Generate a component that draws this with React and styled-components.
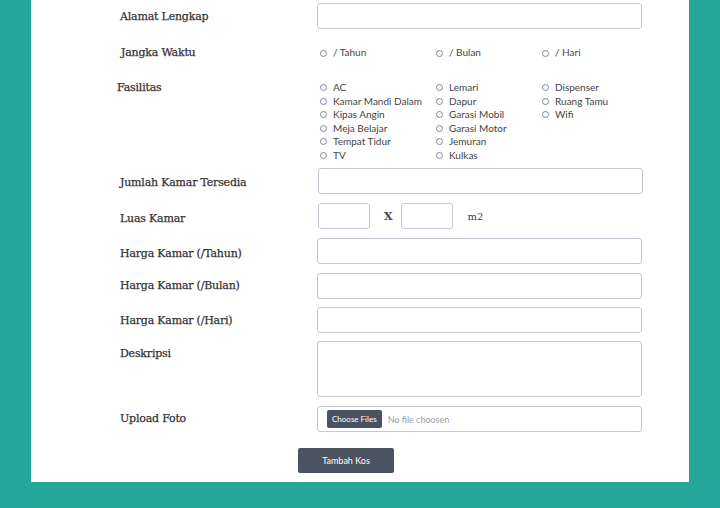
import React from 'react';
import styled, { createGlobalStyle } from 'styled-components';

const GlobalStyle = createGlobalStyle`
  html, body {
    margin: 0;
    padding: 0;
    background: #26a69a;
  }
  body {
    font-family: "Lato", "Noto Sans", sans-serif;
  }
`;

const Panel = styled.div`
  margin: 0 31px;
  background: #fff;
  padding: 3px 0 9px 89px;
  box-sizing: border-box;
`;

const Row = styled.div`
  display: grid;
  grid-template-columns: 197px 325px;
  align-items: ${(p) => (p.$top ? 'start' : 'center')};
  margin-top: ${(p) => p.$gap || 0}px;
`;

const Label = styled.label`
  font-family: "DejaVu Serif", "Liberation Serif", serif;
  font-size: 11px;
  letter-spacing: -0.2px;
  color: #333;
  -webkit-text-stroke: 0.25px #333;
  line-height: 14px;
  margin-left: ${(p) => p.$shift || 0}px;
  padding-top: ${(p) => p.$pad || 0}px;
`;

const TextInput = styled.input`
  box-sizing: border-box;
  width: ${(p) => p.$w || 325}px;
  height: 26px;
  margin-left: ${(p) => p.$x || 0}px;
  border: 1px solid #c5c9d3;
  border-radius: 3px;
  background: #fff;
  outline: none;
  padding: 0 8px;
`;

const TextArea = styled.textarea`
  box-sizing: border-box;
  width: 325px;
  height: 56px;
  border: 1px solid #c5c9d3;
  border-radius: 3px;
  resize: none;
  outline: none;
  display: block;
`;

const Options = styled.div`
  display: grid;
  grid-template-columns: 116px 106px auto;
  grid-auto-flow: ${(p) => (p.$cols ? 'column' : 'row')};
  grid-template-rows: ${(p) => (p.$cols ? `repeat(${p.$cols}, 13.5px)` : 'auto')};
  padding-left: 3px;
`;

const Option = styled.label`
  display: flex;
  align-items: center;
  gap: 6px;
  font-size: 10px;
  color: #444;
  line-height: 13.5px;
  white-space: nowrap;
`;

const Dot = styled.input`
  appearance: none;
  margin: 0;
  width: 7px;
  height: 7px;
  border: 1px solid #7a87a2;
  border-radius: 50%;
  box-sizing: border-box;
  flex: none;
`;

const SizeLine = styled.div`
  display: flex;
  align-items: center;
`;

const Times = styled.span`
  font-family: "DejaVu Serif", serif;
  font-weight: bold;
  font-size: 11px;
  color: #444;
  margin: 0 8px 0 14px;
`;

const Unit = styled.span`
  font-family: "DejaVu Serif", serif;
  font-size: 10px;
  color: #444;
  margin-left: 15px;
`;

const FileBox = styled.div`
  box-sizing: border-box;
  width: 325px;
  height: 26px;
  border: 1px solid #c5c9d3;
  border-radius: 3px;
  display: flex;
  align-items: center;
  padding-left: 9px;
  gap: 6px;
`;

const FileButton = styled.span`
  background: #4a5160;
  color: #fff;
  font-size: 8px;
  border-radius: 2px;
  height: 18px;
  padding: 0 5px;
  display: flex;
  align-items: center;
`;

const FileName = styled.span`
  font-size: 9px;
  color: #9aa0aa;
`;

const Submit = styled.button`
  display: block;
  margin: 16px 0 0 178px;
  width: 96px;
  height: 25px;
  border: none;
  border-radius: 2px;
  background: #4b5260;
  color: #fff;
  font-family: "Lato", sans-serif;
  font-size: 9px;
`;

const periods = ['/ Tahun', '/ Bulan', '/ Hari'];
const facilities = [
  'AC', 'Kamar Mandi Dalam', 'Kipas Angin', 'Meja Belajar', 'Tempat Tidur', 'TV',
  'Lemari', 'Dapur', 'Garasi Mobil', 'Garasi Motor', 'Jemuran', 'Kulkas',
  'Dispenser', 'Ruang Tamu', 'Wifi',
];

export default function App() {
  return (
    <>
      <GlobalStyle />
      <Panel>
        <Row>
          <Label $pad={2}>Alamat Lengkap</Label>
          <TextInput />
        </Row>
        <Row $gap={17}>
          <Label $shift={1}>Jangka Waktu</Label>
          <Options>
            {periods.map((p) => (
              <Option key={p}>
                <Dot type="radio" name="periode" />
                {p}
              </Option>
            ))}
          </Options>
        </Row>
        <Row $gap={21} $top>
          <Label $shift={-3}>Fasilitas</Label>
          <Options $cols={6}>
            {facilities.map((f) => (
              <Option key={f}>
                <Dot type="checkbox" />
                {f}
              </Option>
            ))}
          </Options>
        </Row>
        <Row $gap={6}>
          <Label $pad={4}>Jumlah Kamar Tersedia</Label>
          <TextInput $x={1} />
        </Row>
        <Row $gap={9}>
          <Label $pad={6}>Luas Kamar</Label>
          <SizeLine>
            <TextInput $w={52} $x={1} />
            <Times>X</Times>
            <TextInput $w={52} />
            <Unit>m2</Unit>
          </SizeLine>
        </Row>
        <Row $gap={9}>
          <Label $pad={6}>Harga Kamar (/Tahun)</Label>
          <TextInput />
        </Row>
        <Row $gap={9}>
          <Label>Harga Kamar (/Bulan)</Label>
          <TextInput />
        </Row>
        <Row $gap={8}>
          <Label $pad={2}>Harga Kamar (/Hari)</Label>
          <TextInput />
        </Row>
        <Row $gap={8} $top>
          <Label $pad={6}>Deskripsi</Label>
          <TextArea />
        </Row>
        <Row $gap={9}>
          <Label>Upload Foto</Label>
          <FileBox>
            <FileButton>Choose Files</FileButton>
            <FileName>No file choosen</FileName>
          </FileBox>
        </Row>
        <Submit>Tambah Kos</Submit>
      </Panel>
    </>
  );
}
